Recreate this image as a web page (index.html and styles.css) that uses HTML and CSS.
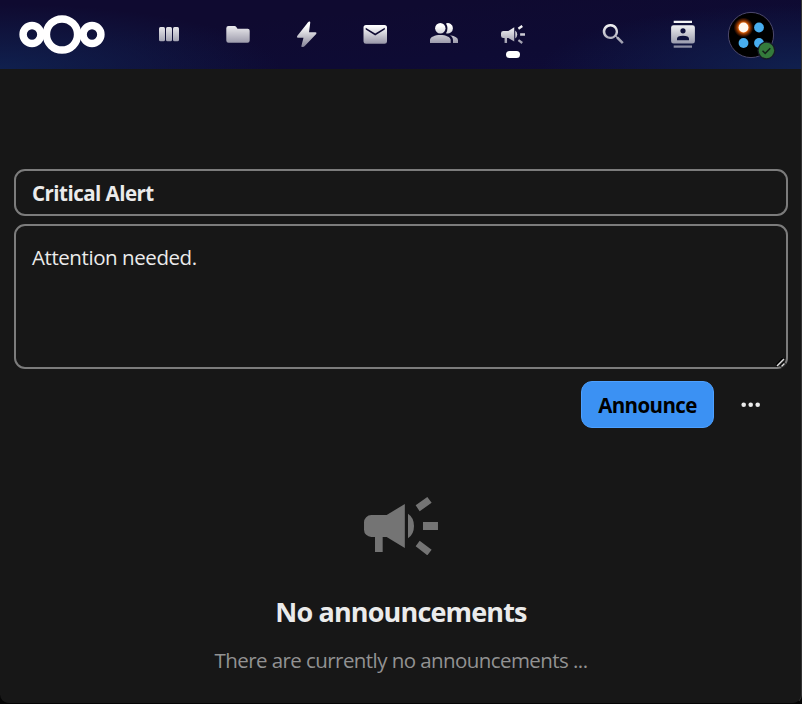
FILE: index.html
```
<!DOCTYPE html>
<html lang="en">
<head>
<meta charset="utf-8">
<title>Announcements</title>
<link rel="stylesheet" href="styles.css">
</head>
<body>
<svg class="defs" width="0" height="0">
  <defs>
    <linearGradient id="fade" gradientUnits="userSpaceOnUse" x1="0" y1="0" x2="0" y2="32">
      <stop offset="0.25" stop-color="#fff"/>
      <stop offset="1" stop-color="#fff" stop-opacity="0.42"/>
    </linearGradient>
    <linearGradient id="fade-dim" gradientUnits="userSpaceOnUse" x1="0" y1="0" x2="0" y2="32">
      <stop offset="0.2" stop-color="#fff" stop-opacity="0.95"/>
      <stop offset="1" stop-color="#fff" stop-opacity="0.45"/>
    </linearGradient>
    <radialGradient id="glow">
      <stop offset="0.45" stop-color="#ff7a1a"/>
      <stop offset="0.65" stop-color="#c44c00" stop-opacity="0.75"/>
      <stop offset="1" stop-color="#a03000" stop-opacity="0"/>
    </radialGradient>
    <symbol id="megaphone" viewBox="72 51 222 175">
      <path d="M94 105H140L194.500 72V204L140 171H128V216H105V171H94A22 22 0 0 1 72 149V127A22 22 0 0 1 94 105Z"/>
      <path d="M204 101Q222 113 222 138T204 175Z"/>
      <path d="M227 76L262 51L275 68L239 94ZM249 126H294V150H249ZM239 182L275 209L262 226L227 199Z"/>
    </symbol>
  </defs>
</svg>
<header class="header">
  <svg class="logo" width="88" height="42" viewBox="0 0 88 42">
    <g fill="none" stroke="#fff" stroke-width="7.5">
      <circle cx="14" cy="20.500" r="8.900"/><circle cx="44" cy="20.500" r="15.600"/><circle cx="74" cy="20.500" r="8.900"/>
    </g>
  </svg>
  <nav class="apps">
    <a class="app"><svg class="icon" viewBox="0 0 32 32"><g fill="url(#fade-dim)"><rect x="6" y="9" width="6" height="14.300" rx="1.500"/><rect x="13" y="9" width="6" height="14.300" rx="1.500"/><rect x="20" y="9" width="6" height="14.300" rx="1.500"/></g></svg></a>
    <a class="app"><svg class="icon" viewBox="0 0 32 32"><path fill="url(#fade-dim)" d="M6.500 8H12.500Q13.600 8 14.300 9L15.500 10.800H25.700Q27.700 10.800 27.700 12.800V22.500Q27.700 24.700 25.500 24.700H6.500Q4.300 24.700 4.300 22.500V10.200Q4.300 8 6.500 8Z"/></svg></a>
    <a class="app"><svg class="icon" viewBox="0 0 32 32"><path fill="url(#fade)" d="M18 3.500H18.700Q19.500 3.700 19.200 5L18 14.300H24.500Q26.200 14.400 25.200 16L14 27.700Q12.800 29.300 10.900 29Q9.900 28.800 10.500 27.500L12.500 19.700H7Q5.200 19.500 6.200 18L15.500 6.300Q16.800 4 18 3.500Z"/></svg></a>
    <a class="app"><svg class="icon" viewBox="0 0 32 32"><path fill="url(#fade)" fill-rule="evenodd" d="M7 7H25.500Q28 7 28 9.500V23.500Q28 25.800 25.500 25.800H7Q4.500 25.800 4.500 23.500V9.500Q4.500 7 7 7ZM6.700 9.700V11.600L16.200 17.500L25.800 11.600V9.700L16.200 15.500Z"/></svg></a>
    <a class="app"><svg class="icon" viewBox="0 0 32 32"><g fill="url(#fade)"><circle cx="12.300" cy="10.300" r="5.200"/><path d="M18 5.400A5.200 5.200 0 1 1 18 15.200Q21 10.300 18 5.400ZM2 25V22C2 19 7 17 12.300 17S22.700 19 22.700 22V25ZM22 17.200Q30 18.500 30 22.300V25H25V22.300Q25 19 22 17.200Z"/></g></svg></a>
    <a class="app active"><svg class="icon mega" viewBox="72 51 222 175"><defs><linearGradient id="mega-fade" gradientUnits="userSpaceOnUse" x1="0" y1="51" x2="0" y2="226"><stop stop-color="#fff"/><stop offset="1" stop-color="#fff" stop-opacity=".58"/></linearGradient></defs><use href="#megaphone" x="72" y="51" width="222" height="175" fill="url(#mega-fade)"/></svg></a>
  </nav>
  <div class="tools">
    <a class="app"><svg class="icon search" viewBox="0 0 32 32"><path fill="url(#fade-dim)" fill-rule="evenodd" d="M13.500 6A7.500 7.500 0 0 1 19.500 18L20.300 18.700H21.300L26.700 24.200L24.900 26L19.400 20.500V19.500L18.600 18.700A7.500 7.500 0 1 1 13.500 6ZM13.500 8.400A5.200 5.200 0 1 0 13.500 18.800A5.200 5.200 0 1 0 13.500 8.400Z"/></svg></a>
    <a class="app"><svg class="icon contacts" viewBox="0 0 32 32"><path fill="url(#fade-dim)" fill-rule="evenodd" d="M6.700 2.800H25V5H6.700ZM6.700 27.600H25V29.800H6.700ZM6.500 7.200H25.500Q27.900 7.200 27.900 9.500V23.300Q27.900 25.600 25.500 25.600H6.500Q4.100 25.600 4.100 23.300V9.500Q4.100 7.200 6.500 7.200ZM16 10.200A2.600 2.600 0 1 0 16 15.400A2.600 2.600 0 1 0 16 10.200ZM10 22.200H22V20.800Q22 17.800 16 17.800T10 20.800Z"/></svg></a>
    <a class="app"><svg class="avatar" width="52" height="52" viewBox="0 0 52 52">
      <circle cx="26" cy="26" r="22.600" fill="#000" stroke="#4c486c" stroke-width="1"/>
      <circle cx="18.500" cy="18.500" r="10" fill="url(#glow)"/><circle cx="18.500" cy="18.500" r="4.900" fill="#fff8f0"/>
      <g fill="#48aef0"><circle cx="34" cy="18.500" r="4.900"/><circle cx="18.500" cy="34" r="4.900"/><circle cx="34" cy="34" r="4.900"/></g>
      <circle cx="41.400" cy="41.500" r="9" fill="#171b25"/><circle cx="41.400" cy="41.500" r="7.700" fill="#347b3b"/>
      <path d="M37.500 41.700L40.200 44.400L45.300 39.200" fill="none" stroke="#14221a" stroke-width="1.500"/>
    </svg></a>
  </div>
</header>
<main class="content">
  <form class="form">
    <input class="field subject" value="Critical Alert" aria-label="Subject">
    <div class="message-wrap">
      <textarea class="field message" aria-label="Message">Attention needed.</textarea>
      <svg class="grip" width="10" height="10" viewBox="0 0 10 10"><path d="M0 8L8 0M5 9L9 5" stroke="#000" stroke-width="3"/><path d="M1 8L8 1M5.500 8.500L8.500 5.500" stroke="#ddd" stroke-width="1.500"/></svg>
    </div>
    <div class="actions">
      <button class="announce" type="button">Announce</button>
      <button class="more" type="button" aria-label="More"><svg width="20" height="6" viewBox="0 0 20 6" fill="#ebebeb"><circle cx="2.700" cy="2.800" r="2.300"/><circle cx="9.700" cy="2.800" r="2.300"/><circle cx="16.700" cy="2.800" r="2.300"/></svg></button>
    </div>
  </form>
  <section class="empty">
    <svg class="empty-icon" width="74" height="58.300" fill="#747474"><use href="#megaphone" width="74" height="58.300"/></svg>
    <h2 class="title">No announcements</h2>
    <p class="hint">There are currently no announcements ...</p>
  </section>
</main>
</body>
</html>
```
FILE: styles.css
```
* { box-sizing: border-box; }
html { background: #050505; }
body {
  margin: 0;
  height: 704px;
  overflow: hidden;
  display: flex;
  flex-direction: column;
  font-family: "Open Sans", "Noto Sans", sans-serif;
  font-size: 20px;
  color: #ebebeb;
  background: #171717;
  border-right: 1px solid #343434;
  border-bottom: 1px solid #050505;
  border-radius: 0 0 9px 9px;
}
.defs { position: absolute; }
.header {
  height: 69px;
  flex: none;
  display: flex;
  align-items: center;
  padding: 0 15.500px 0 18px;
  background:
    radial-gradient(ellipse 280px 65px at 0 100%, #10204e, transparent),
    radial-gradient(ellipse 260px 65px at 100% 100%, #10204e, transparent),
    linear-gradient(175deg, #0f0a30 30%, #0e0b34 70%, #0f0c38);
}
.logo { flex: none; }
.apps { display: flex; margin-left: 28.600px; }
.tools { display: flex; margin-left: auto; }
.app {
  width: 68.800px;
  height: 69px;
  display: flex;
  align-items: center;
  justify-content: center;
  position: relative;
}
.icon { width: 32px; height: 32px; margin-bottom: 1px; }
.mega { width: 24px; height: 19px; margin-bottom: 0; }
.search { margin-right: 2px; }
.contacts { margin-left: 1px; }
.active::after {
  content: "";
  position: absolute;
  left: 27.500px;
  top: 51px;
  width: 14px;
  height: 7px;
  border-radius: 4px;
  background: #fff;
}
.avatar { flex: none; }
.content { padding: 100px 13px 0 14px; }
.form { display: flex; flex-direction: column; }
.field {
  display: block;
  width: 100%;
  margin: 0;
  border: 2px solid #7c7c7c;
  border-radius: 11px;
  background: #171717;
  color: #ebebeb;
  font-family: inherit;
  font-size: 20.500px;
  outline: 0;
}
.subject { height: 47px; padding: 1px 16px 0; font-weight: 700; letter-spacing: -0.520px; }
.message-wrap { position: relative; margin-top: 8px; }
.message { height: 145px; padding: 16px; line-height: 30px; resize: none; overflow: hidden; letter-spacing: -0.430px; }
.grip { position: absolute; right: 2px; bottom: 1px; }
.actions { display: flex; align-items: center; justify-content: flex-end; margin-top: 12px; padding-right: 14px; gap: 14px; }
.announce {
  width: 133px;
  height: 47px;
  padding: 1px 0 0;
  border: 1px solid #4da0ff;
  border-radius: 11px;
  background: #3b91f3;
  color: #000;
  font: 700 20.500px "Open Sans", sans-serif;
  letter-spacing: -0.600px;
}
.more { width: 46px; height: 46px; padding: 0; border: 0; background: none; display: flex; align-items: center; justify-content: center; }
.empty { display: flex; flex-direction: column; align-items: center; margin-top: 69px; }
.empty-icon { display: block; }
.title { margin: 37px 0 0; font-size: 27px; line-height: 40px; letter-spacing: -0.850px; }
.hint { margin: 13px 0 0; font-size: 20.500px; line-height: 30px; color: #929292; letter-spacing: -0.570px; }
```
